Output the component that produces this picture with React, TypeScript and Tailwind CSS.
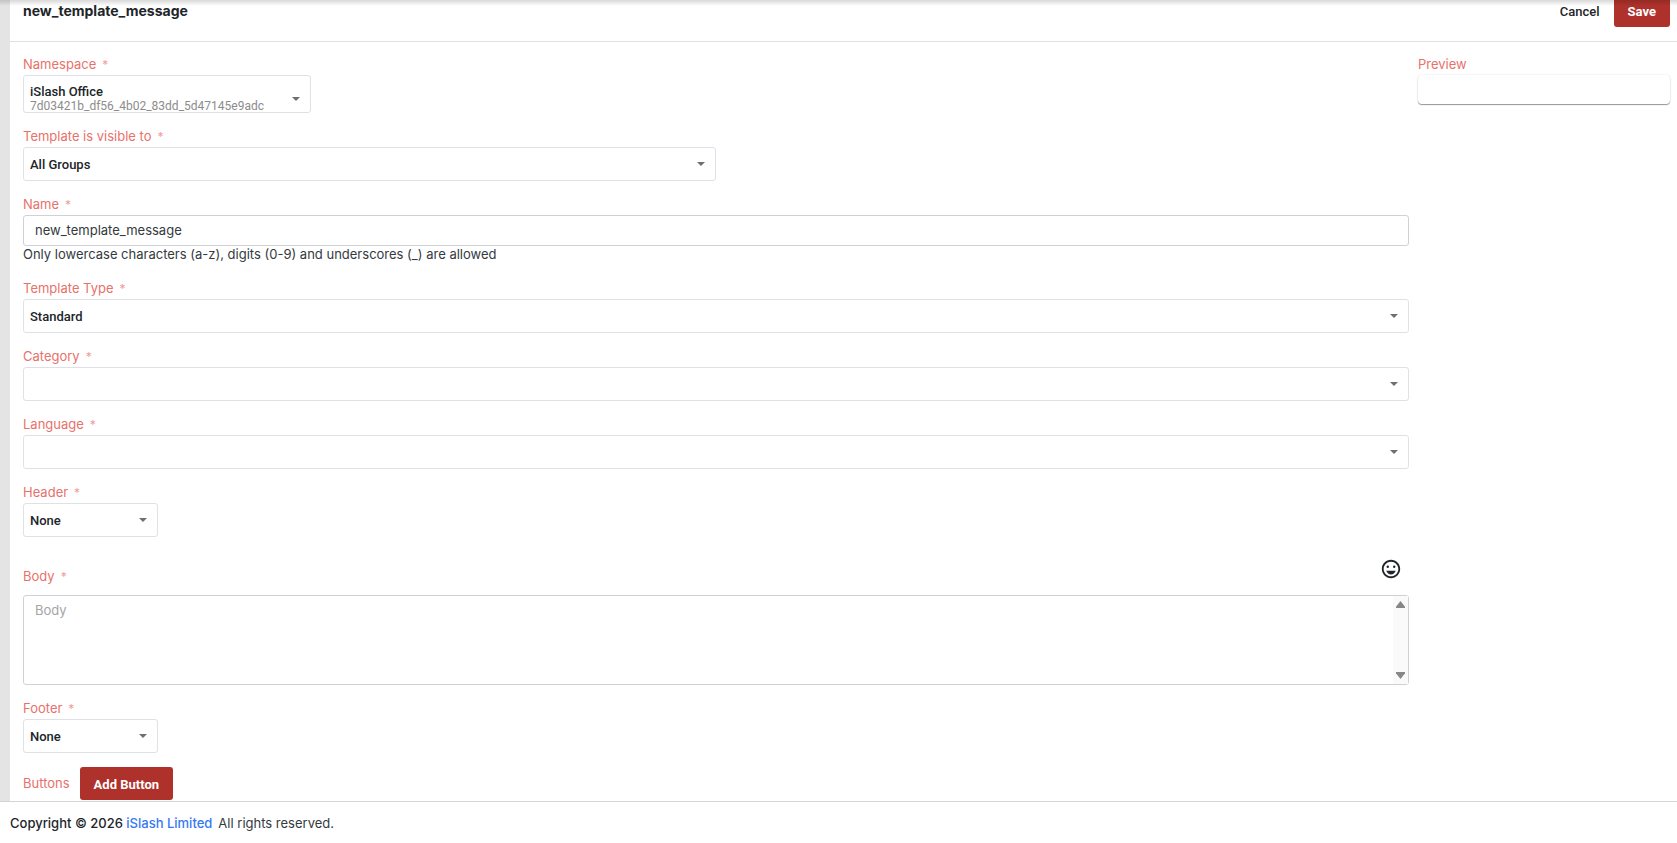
import { useState } from "react";
import type { ReactNode } from "react";

const boxBorder = "rounded-[3px] border border-[#dee1e6] bg-white";
const labelText = "text-[13px] leading-[22px] text-[#e8716b]";
const primaryButton =
  "h-[33px] cursor-pointer rounded-[3px] bg-[#ae312b] px-3.5 pt-0.5 font-[Roboto,sans-serif] text-[13px] font-bold text-white";

function Caret() {
  return (
    <svg width="8" height="4" viewBox="0 0 8 4" className="shrink-0 fill-[#6f6f6f]" aria-hidden="true">
      <path d="M0 0h8L4 4z" />
    </svg>
  );
}

function Required() {
  return <span className="ml-1.5 text-xs text-[#f09d98]">*</span>;
}

function Label({ htmlFor, children }: { htmlFor: string; children: ReactNode }) {
  return (
    <label htmlFor={htmlFor} className={`block pt-0.5 ${labelText}`}>
      {children}
      <Required />
    </label>
  );
}

type SelectFieldProps = { id: string; label: string; options: string[]; width?: string };

function SelectField({ id, label, options, width = "w-full" }: SelectFieldProps) {
  return (
    <div>
      <Label htmlFor={id}>{label}</Label>
      <div className={`relative ${width}`}>
        <select
          id={id}
          className={`block h-[34px] w-full appearance-none px-1.5 pt-0.5 font-[Roboto,sans-serif] text-[13px] font-medium text-[#212529] ${boxBorder}`}
        >
          {options.map((option) => (
            <option key={option}>{option}</option>
          ))}
        </select>
        <span className="pointer-events-none absolute inset-y-0 right-[11px] flex items-center">
          <Caret />
        </span>
      </div>
    </div>
  );
}

function EmojiIcon() {
  return (
    <svg width="22" height="22" viewBox="0 0 24 24" fill="#212529" aria-hidden="true">
      <path d="M12 2C6.47 2 2 6.5 2 12s4.47 10 9.99 10C17.52 22 22 17.52 22 12S17.52 2 12 2zm0 18c-4.42 0-8-3.58-8-8s3.58-8 8-8 8 3.58 8 8-3.58 8-8 8z" />
      <circle cx="8.5" cy="9.5" r="1.3" />
      <circle cx="15.500" cy="9.5" r="1.3" />
      <path d="M12 18c2.3 0 4.3-1.5 5.1-4H6.9c.8 2.5 2.8 4 5.1 4z" />
    </svg>
  );
}

export default function App() {
  const [name, setName] = useState("new_template_message");
  const [body, setBody] = useState("");

  return (
    <div className="relative flex min-h-screen flex-col overflow-hidden bg-white font-[Inter,sans-serif] text-[13px] text-[#343a40]">
      <div className="pointer-events-none absolute inset-x-0 top-0 z-10 h-1.5 bg-linear-to-b from-black/15 to-transparent" />
      <div className="flex grow bg-[#e4e4e4] pl-2.5">
        <main className="grow bg-white">
          <header className="flex h-[42px] items-start justify-between border-b border-[#dee1e6] pr-[7px] pl-[13px]">
            <h1 className="text-sm leading-[22px] font-bold text-[#212529]">{name}</h1>
            <div className="-mt-1.5 flex">
              <button
                type="button"
                className="h-[33px] cursor-pointer px-3.5 pt-0.5 font-[Roboto,sans-serif] text-[13px] font-medium text-[#212529]"
              >
                Cancel
              </button>
              <button type="button" className={primaryButton}>
                Save
              </button>
            </div>
          </header>

          <div className="flex gap-[9px] pt-[9px] pr-[7px] pl-[13px]">
            <form className="flex grow flex-col gap-2.5" onSubmit={(e) => e.preventDefault()}>
              <div>
                <Label htmlFor="namespace">Namespace</Label>
                <button
                  id="namespace"
                  type="button"
                  aria-haspopup="listbox"
                  className={`flex h-[38px] w-72 items-center justify-between overflow-hidden pt-2.5 pr-2.5 pl-1.5 text-left font-[Roboto,sans-serif] text-[13px] leading-[14px] font-medium text-[#212529] ${boxBorder}`}
                >
                  <span>
                    <span className="block">iSlash Office</span>
                    <span className="block text-xs leading-[14px] font-normal text-[#8c8c8c]">
                      7d03421b_df56_4b02_83dd_5d47145e9adc
                    </span>
                  </span>
                  <Caret />
                </button>
              </div>

              <SelectField id="visible" label="Template is visible to" options={["All Groups"]} width="w-1/2" />

              <div>
                <Label htmlFor="name">Name</Label>
                <input
                  id="name"
                  value={name}
                  onChange={(e) => setName(e.target.value)}
                  className="block h-[31px] w-full rounded-[3px] border border-[#ced2d8] bg-white px-[11px] pb-0.5"
                />
                <p className="pb-0.5 leading-[17px]">
                  Only lowercase characters (a-z), digits (0-9) and underscores (_) are allowed
                </p>
              </div>

              <SelectField id="type" label="Template Type" options={["Standard"]} />
              <SelectField id="category" label="Category" options={[""]} />
              <SelectField id="language" label="Language" options={[""]} />
              <SelectField id="header" label="Header" options={["None"]} width="w-[135px]" />

              <div>
                <div className="flex items-end justify-between pt-1 pb-2">
                  <Label htmlFor="body">Body</Label>
                  <button type="button" aria-label="Insert emoji" className="flex size-9 cursor-pointer items-center justify-center">
                    <EmojiIcon />
                  </button>
                </div>
                <div className="relative">
                  <textarea
                    id="body"
                    placeholder="Body"
                    value={body}
                    onChange={(e) => setBody(e.target.value)}
                    className="block h-[90px] w-full resize-none rounded-[3px] border border-[#ced2d8] px-[11px] py-1 leading-[21px] placeholder:text-[#a5a5a5]"
                  />
                  <div className="pointer-events-none absolute inset-y-px right-px flex w-[15px] flex-col items-center justify-between bg-[#fafafa] py-[5px]">
                    <svg width="9" height="7" viewBox="0 0 9 7" className="fill-[#878787]" aria-hidden="true">
                      <path d="M4.5 0 9 5.8V7H0V5.8z" />
                    </svg>
                    <svg width="9" height="7" viewBox="0 0 9 7" className="fill-[#878787]" aria-hidden="true">
                      <path d="M4.5 7 9 1.2V0H0v1.2z" />
                    </svg>
                  </div>
                </div>
              </div>

              <SelectField id="footer" label="Footer" options={["None"]} width="w-[135px]" />

              <div className="flex items-center gap-2.5 pt-1">
                <span className={`pb-0.5 ${labelText}`}>Buttons</span>
                <button type="button" className={primaryButton}>
                  Add Button
                </button>
              </div>
            </form>

            <aside className="w-[252px] shrink-0">
              <h2 className={`pt-0.5 ${labelText}`}>Preview</h2>
              <div className="h-[29px] rounded-[4px] bg-white shadow-[0_1px_1px_rgba(0,0,0,0.4),0_0_2px_rgba(0,0,0,0.12)]" />
            </aside>
          </div>
        </main>
      </div>

      <footer className="flex h-[42px] items-center gap-1.5 border-t border-[#d3d4d8] bg-white pt-0.5 pl-2.5">
        <span className="font-medium text-[#212529]">
          Copyright © 2026{" "}
          <a href="#islash" className="text-[#3478f6]">
            iSlash Limited
          </a>
        </span>
        <span>All rights reserved.</span>
      </footer>
    </div>
  );
}
